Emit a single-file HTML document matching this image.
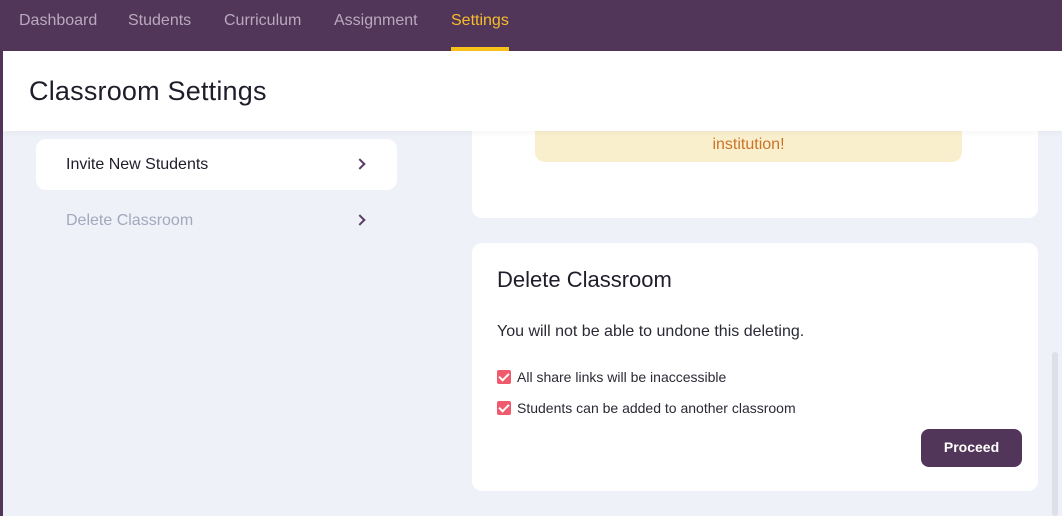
<!DOCTYPE html>
<html><head><style>
*{margin:0;padding:0;box-sizing:border-box}
body{width:1062px;height:516px;overflow:hidden;background:#eef1f8;font-family:"Liberation Sans",sans-serif;position:relative}
.strip{position:absolute;left:0;top:0;width:3px;height:516px;background:#523659}
.nav{position:absolute;left:0;top:0;width:1062px;height:51px;background:#523659}
.nav span{position:absolute;top:12px;font-size:16px;color:#b7a9bf}
.nav .act{color:#f7bd2a}
.ul{position:absolute;left:451px;top:47px;width:58px;height:4px;background:#f7c21a}
.head{position:absolute;left:3px;top:51px;width:1059px;height:80px;background:#fff;box-shadow:0 2px 6px rgba(0,0,0,.04)}
.head h1{position:absolute;left:26px;top:25px;font-size:27px;font-weight:normal;color:#1e1e2a;letter-spacing:0.2px}
.item{position:absolute;left:36px;width:361px;height:51px;border-radius:10px;font-size:16px}
.item span{position:absolute;left:30px;top:17px}
.item i{position:absolute;left:320px;top:21px;width:8px;height:8px;border-right:2px solid #5a3a68;border-top:2px solid #5a3a68;transform:rotate(45deg)}
.card{position:absolute;left:472px;width:566px;background:#fff;border-radius:10px}
.warn{position:absolute;left:63px;width:427px;background:#faefcd;border-radius:0 0 10px 10px;text-align:center;color:#c9742a;font-size:16px}
.cb{position:absolute;left:25px;width:14px;height:14px;background:#ef5a6c;border-radius:2px}
.cb:after{content:"";position:absolute;left:4px;top:1px;width:4px;height:8px;border-right:2px solid #fff;border-bottom:2px solid #fff;transform:rotate(45deg)}
.lbl{position:absolute;left:45px;font-size:14px;color:#2a2a35}
.btn{position:absolute;left:449px;top:186px;width:101px;height:38px;background:#523659;border-radius:8px;color:#fff;font-weight:bold;font-size:14px;text-align:center;line-height:37px}
.sb{position:absolute;left:1052px;top:352px;width:6px;height:164px;background:#dde0e8;border-radius:3px}
</style></head><body>
<div class="nav">
<span style="left:19px">Dashboard</span>
<span style="left:128px">Students</span>
<span style="left:224px">Curriculum</span>
<span style="left:334px">Assignment</span>
<span class="act" style="left:451px">Settings</span>
<div class="ul"></div>
</div>
<div class="strip"></div>
<div class="card" style="top:100px;height:118px;overflow:hidden"><div class="warn" style="top:0;height:62px;padding-top:36px">institution!</div></div>
<div class="head"><h1>Classroom Settings</h1></div>
<div class="item" style="top:139px;background:#fff;color:#1e1e2a"><span>Invite New Students</span><i></i></div>
<div class="item" style="top:195px;color:#a4a7bd"><span>Delete Classroom</span><i></i></div>
<div class="card" style="top:243px;height:248px">
<div style="position:absolute;left:25px;top:24px;font-size:22px;color:#1e1e2a">Delete Classroom</div>
<div style="position:absolute;left:25px;top:80px;font-size:16px;color:#2a2a35">You will not be able to undone this deleting.</div>
<div class="cb" style="top:127px"></div><div class="lbl" style="top:126px">All share links will be inaccessible</div>
<div class="cb" style="top:158px"></div><div class="lbl" style="top:157px">Students can be added to another classroom</div>
<div class="btn">Proceed</div>
</div>
<div class="sb"></div>
</body></html>
